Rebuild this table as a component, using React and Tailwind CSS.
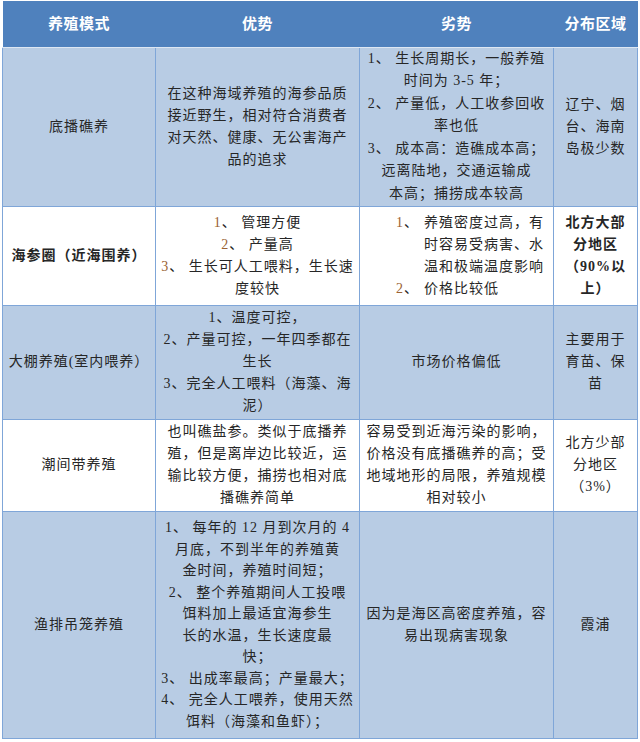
import React from 'react';

const font = "font-['Liberation_Serif','Noto_Sans_CJK_SC',serif]";

const Num = ({ children }) => <span className="text-[#9a6232]">{children}</span>;

function Lines({ lines, className = '' }) {
    return (
        <div className={`flex flex-col items-center ${className}`}>
            {lines.map((l, i) => (
                <div key={i} className="whitespace-nowrap">{l}</div>
            ))}
        </div>
    );
}

const rows = [
    {
        bg: 'bg-[#b8cce4]',
        h: 'h-[159px]',
        mode: '底播礁养',
        good: <Lines lines={['在这种海域养殖的海参品质', '接近野生，相对符合消费者', '对天然、健康、无公害海产', '品的追求']} />,
        bad: (
            <Lines
                className="leading-[22.5px]"
                lines={['1、 生长周期长，一般养殖', '时间为 3-5 年；', '2、 产量低，人工收参回收', '率也低', '3、 成本高：造礁成本高；', '远离陆地，交通运输成', '本高；捕捞成本较高']}
            />
        ),
        area: <Lines lines={['辽宁、烟', '台、海南', '岛极少数']} />,
    },
    {
        bg: 'bg-white',
        h: 'h-[99px]',
        mode: <span className="font-bold">海参圈（近海围养）</span>,
        good: (
            <Lines
                lines={[
                    <><Num>1</Num>、 管理方便</>,
                    <><Num>2</Num>、 产量高</>,
                    <><Num>3</Num>、 生长可人工喂料，生长速</>,
                    '度较快',
                ]}
            />
        ),
        bad: (
            <div className="pl-[36px] text-left">
                <div className="flex whitespace-nowrap">
                    <span className="w-[28px] shrink-0"><Num>1</Num>、</span>
                    <span>养殖密度过高，有<br />时容易受病害、水<br />温和极端温度影响</span>
                </div>
                <div className="flex whitespace-nowrap">
                    <span className="w-[28px] shrink-0"><Num>2</Num>、</span>
                    <span>价格比较低</span>
                </div>
            </div>
        ),
        area: <Lines className="font-bold" lines={['北方大部', '分地区', '（90%以', '上）']} />,
    },
    {
        bg: 'bg-[#b8cce4]',
        h: 'h-[114px]',
        mode: '大棚养殖(室内喂养）',
        good: <Lines lines={['1、温度可控，', '2、产量可控，一年四季都在', '生长', '3、完全人工喂料（海藻、海', '泥）']} />,
        bad: '市场价格偏低',
        area: <Lines lines={['主要用于', '育苗、保', '苗']} />,
    },
    {
        bg: 'bg-white',
        h: 'h-[92px]',
        mode: '潮间带养殖',
        good: <Lines lines={['也叫礁盐参。类似于底播养', '殖，但是离岸边比较近，运', '输比较方便，捕捞也相对底', '播礁养简单']} />,
        bad: <Lines lines={['容易受到近海污染的影响，', '价格没有底播礁养的高；受', '地域地形的局限，养殖规模', '相对较小']} />,
        area: <Lines lines={['北方少部', '分地区', '（3%）']} />,
    },
    {
        bg: 'bg-[#b8cce4]',
        h: 'h-[227px]',
        mode: '渔排吊笼养殖',
        good: (
            <Lines
                className="leading-[21.5px]"
                lines={[
                    '1、 每年的 12 月到次月的 4',
                    '月底，不到半年的养殖黄',
                    '金时间，养殖时间短；',
                    '2、 整个养殖期间人工投喂',
                    '饵料加上最适宜海参生',
                    '长的水温，生长速度最',
                    '快；',
                    '3、 出成率最高；产量最大；',
                    '4、 完全人工喂养，使用天然',
                    '饵料（海藻和鱼虾）；',
                ]}
            />
        ),
        bad: <Lines lines={['因为是海区高密度养殖，容', '易出现病害现象']} />,
        area: '霞浦',
    },
];

export default function App() {
    const cell = 'border border-[#7fa6d8] text-center align-middle p-0';
    return (
        <div className={`bg-white w-[640px] h-[742px] pt-[1px] pl-[2px] ${font} text-[14px] tracking-[1px] leading-[22px] text-[#262626]`}>
            <table className="table-fixed border-collapse w-[635px]">
                <colgroup>
                    <col className="w-[153px]" />
                    <col className="w-[204px]" />
                    <col className="w-[194px]" />
                    <col className="w-[84px]" />
                </colgroup>
                <thead>
                    <tr className="h-[46px] bg-[#4f81bd] text-white font-bold text-[15px] tracking-[0.5px]">
                        <th className="border-b border-b-[#dde7f3] align-middle">养殖模式</th>
                        <th className="border-b border-b-[#dde7f3] align-middle">优势</th>
                        <th className="border-b border-b-[#dde7f3] align-middle">劣势</th>
                        <th className="border-b border-b-[#dde7f3] align-middle">分布区域</th>
                    </tr>
                </thead>
                <tbody>
                    {rows.map((r, i) => (
                        <tr key={i} className={`${r.bg} ${r.h}`}>
                            <td className={cell}>{r.mode}</td>
                            <td className={cell}>{r.good}</td>
                            <td className={cell}>{r.bad}</td>
                            <td className={cell}>{r.area}</td>
                        </tr>
                    ))}
                </tbody>
            </table>
        </div>
    );
}
